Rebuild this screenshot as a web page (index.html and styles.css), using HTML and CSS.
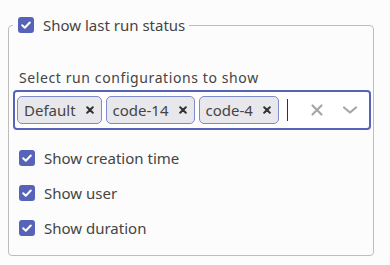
FILE: index.html
```html
<!DOCTYPE html>
<html lang="en">
<head>
    <meta charset="UTF-8">
    <title>Run status settings</title>
    <link rel="stylesheet" href="styles.css">
</head>
<body>

<fieldset class="panel">
    <legend class="panel-legend">
        <label class="check-row">
            <span class="check"><svg viewBox="0 0 16 16" width="16" height="16"><path d="M4.2 8.3l2.6 2.5 5-5.3" fill="none" stroke="#fff" stroke-width="2" stroke-linecap="round" stroke-linejoin="round"/></svg></span>
            Show last run status
        </label>
    </legend>

    <div class="field-label">Select run configurations to show</div>
    <div class="multi-select">
        <div class="chips">
            <span class="chip">Default <svg class="chip-x" viewBox="0 0 8 8" width="8" height="8"><path d="M1.2 1.2l5.6 5.6M6.8 1.2l-5.6 5.6" stroke="#333" stroke-width="2" stroke-linecap="round"/></svg></span>
            <span class="chip">code-14 <svg class="chip-x" viewBox="0 0 8 8" width="8" height="8"><path d="M1.2 1.2l5.6 5.6M6.8 1.2l-5.6 5.6" stroke="#333" stroke-width="2" stroke-linecap="round"/></svg></span>
            <span class="chip">code-4 <svg class="chip-x" viewBox="0 0 8 8" width="8" height="8"><path d="M1.2 1.2l5.6 5.6M6.8 1.2l-5.6 5.6" stroke="#333" stroke-width="2" stroke-linecap="round"/></svg></span>
            <span class="caret"></span>
        </div>
        <div class="controls">
            <svg class="clear" viewBox="0 0 14 14" width="14" height="14"><path d="M2.5 2.5l9 9M11.5 2.5l-9 9" stroke="#a6a6a6" stroke-width="2.2" stroke-linecap="round"/></svg>
            <svg class="chevron" viewBox="0 0 16 10" width="16" height="10"><path d="M2 2.5l6 5 6-5" fill="none" stroke="#a6a6a6" stroke-width="2.2" stroke-linecap="round" stroke-linejoin="round"/></svg>
        </div>
    </div>

    <!-- other columns -->
    <div class="options">
        <label class="check-row">
            <span class="check"><svg viewBox="0 0 16 16" width="16" height="16"><path d="M4.2 8.3l2.6 2.5 5-5.3" fill="none" stroke="#fff" stroke-width="2" stroke-linecap="round" stroke-linejoin="round"/></svg></span>
            Show creation time
        </label>
        <label class="check-row">
            <span class="check"><svg viewBox="0 0 16 16" width="16" height="16"><path d="M4.2 8.3l2.6 2.5 5-5.3" fill="none" stroke="#fff" stroke-width="2" stroke-linecap="round" stroke-linejoin="round"/></svg></span>
            Show user
        </label>
        <label class="check-row">
            <span class="check"><svg viewBox="0 0 16 16" width="16" height="16"><path d="M4.2 8.3l2.6 2.5 5-5.3" fill="none" stroke="#fff" stroke-width="2" stroke-linecap="round" stroke-linejoin="round"/></svg></span>
            Show duration
        </label>
    </div>
</fieldset>

</body>
</html>
```

FILE: styles.css
```css
body {
    margin: 15px 8px 8px;
    font-family: "Noto Sans", "Open Sans", sans-serif;
    font-size: 15px;
    color: #444;
    background-color: #fcfcfc;
}
.panel {
    margin: 0;
    width: 366px;
    box-sizing: border-box;
    border: 1px solid #bdbdbd;
    border-radius: 4px;
    padding: 0 2px 17px 4px;
}
.panel-legend {
    padding: 0 4px 0 5px;
    margin-left: 0;
}
.check-row {
    display: flex;
    align-items: center;
    gap: 9px;
    line-height: 20px;
}
.check {
    display: flex;
    width: 16px;
    height: 16px;
    background-color: #5762b9;
    border-radius: 3px;
}
.field-label {
    margin-top: 33px;
    margin-left: 6px;
    font-size: 14px;
    letter-spacing: 0.6px;
    line-height: 20px;
}
.multi-select {
    margin-top: 2px;
    height: 40px;
    box-sizing: border-box;
    border: 2px solid #5563b8;
    border-radius: 4px;
    background-color: #fff;
    display: flex;
    align-items: center;
    padding: 0 2px;
}
.chips {
    flex: 1;
    display: flex;
    align-items: center;
    gap: 4px;
}
.chip {
    display: flex;
    align-items: center;
    height: 28px;
    box-sizing: border-box;
    padding: 0 7px 0 6px;
    background-color: #e8e8ec;
    border: 1px solid #7f8ac8;
    border-radius: 5px;
    line-height: 20px;
}
.chip-x {
    margin-left: 10px;
}
.caret {
    width: 1px;
    height: 22px;
    background-color: #333;
    margin-left: 4px;
}
.controls {
    display: flex;
    align-items: center;
    gap: 18px;
    padding-right: 9px;
}
.options {
    display: flex;
    flex-direction: column;
    gap: 15px;
    margin-top: 18px;
    padding-left: 6px;
}
```
